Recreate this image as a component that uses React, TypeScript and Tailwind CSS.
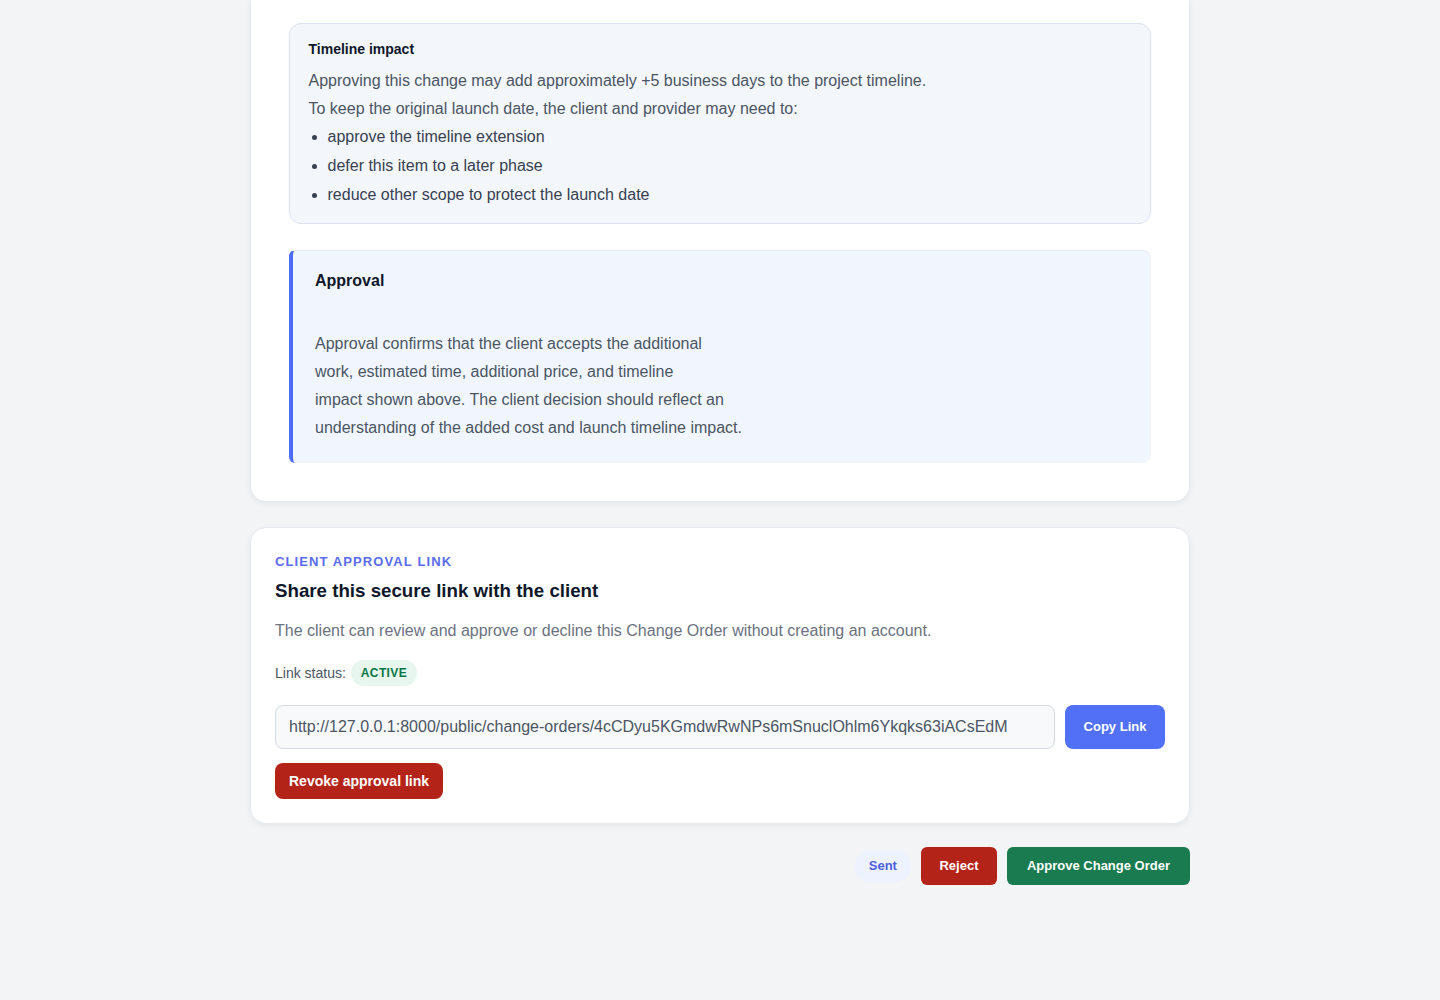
import { useState } from 'react';

const approvalLink =
    'http://127.0.0.1:8000/public/change-orders/4cCDyu5KGmdwRwNPs6mSnuclOhlm6Ykqks63iACsEdM';

const timelineOptions = [
    'approve the timeline extension',
    'defer this item to a later phase',
    'reduce other scope to protect the launch date',
];

function TimelineImpact() {
    return (
        <section className="rounded-xl border border-[#dde3ee] bg-[#f3f6fb] pb-[14px] pl-[18.5px] pr-5 pt-[15px]">
            <h4 className="text-[14px] font-bold leading-5 text-[#0f172a]">Timeline impact</h4>
            <p className="mt-2 text-[16px] leading-7 text-[#4b5563]">
                Approving this change may add approximately +5 business days to the project timeline.
            </p>
            <p className="text-[16px] leading-7 text-[#4b5563]">
                To keep the original launch date, the client and provider may need to:
            </p>
            <ul className="list-disc space-y-[1px] pl-[19px] text-[16px] leading-7 text-[#374151]">
                {timelineOptions.map((item) => (
                    <li key={item}>{item}</li>
                ))}
            </ul>
        </section>
    );
}

function ApprovalNote() {
    return (
        <section className="mt-[26px] rounded-lg rounded-l-md border-l-4 border-t border-l-[#4f6ef7] border-t-[#e5e9f2] bg-[#f1f5fe] pb-[21px] pl-[22px] pr-6 pt-[18px]">
            <h4 className="text-[16px] font-bold leading-6 text-[#0f172a]">Approval</h4>
            <p className="mt-[37px] text-[16px] leading-7 text-[#4b5563]">
                Approval confirms that the client accepts the additional
                <br />
                work, estimated time, additional price, and timeline
                <br />
                impact shown above. The client decision should reflect an
                <br />
                understanding of the added cost and launch timeline impact.
            </p>
        </section>
    );
}

function ApprovalLinkCard() {
    const [copied, setCopied] = useState(false);

    return (
        <section className="mt-[25px] rounded-2xl border border-[#e6e9ef] bg-white p-6 shadow-[0_2px_6px_rgba(15,23,42,0.06)]">
            <p className="text-[13px] font-semibold uppercase leading-5 tracking-[0.085em] text-[#5b6cf0]">
                Client approval link
            </p>
            <h3 className="mt-[5px] text-[18.72px] font-bold leading-7 text-[#0f172a]">
                Share this secure link with the client
            </h3>
            <p className="mt-3.5 text-[16px] leading-6 text-[#6b7280]">
                The client can review and approve or decline this Change Order without creating an account.
            </p>

            <div className="mt-[17px] flex items-center gap-[5px]">
                <span className="text-[14px] text-[#4b5563]">Link status:</span>
                <span className="inline-flex h-[26px] items-center rounded-full bg-[#e7f6ee] px-[10px] text-[12px] font-bold tracking-[0.03em] text-[#067647]">
                    ACTIVE
                </span>
            </div>

            <div className="mt-[19px] flex gap-[10px]">
                <input
                    readOnly
                    value={approvalLink}
                    className="h-[44px] flex-1 rounded-lg border border-[#d5d9e2] bg-[#f8f9fb] px-[13px] text-[16px] text-[#4b5563] outline-none"
                />
                <button
                    type="button"
                    onClick={() => setCopied(true)}
                    className="h-[44px] w-[100px] rounded-lg bg-[#5170f5] text-[13px] font-bold text-white"
                >
                    {copied ? 'Copied' : 'Copy Link'}
                </button>
            </div>

            <button
                type="button"
                className="mt-3.5 h-[36px] rounded-lg bg-[#b42318] px-[14px] text-[14px] font-bold text-white"
            >
                Revoke approval link
            </button>
        </section>
    );
}

export default function App() {
    return (
        <div className="min-h-[1000px] bg-[#f3f4f6] font-['Liberation_Sans',Arial,sans-serif]">
            <div className="mx-auto w-[940px]">
                <article className="rounded-b-2xl border border-t-0 border-[#e6e9ef] bg-white px-[38px] pb-[38px] pt-[23px] shadow-[0_2px_6px_rgba(15,23,42,0.06)]">
                    <TimelineImpact />
                    <ApprovalNote />
                </article>

                <ApprovalLinkCard />

                <div className="mt-[23px] flex items-center justify-end gap-[10px]">
                    <span className="inline-flex h-[32px] items-center rounded-full bg-[#eef2ff] px-[14px] text-[13px] font-bold text-[#4f5fe0]">
                        Sent
                    </span>
                    <button
                        type="button"
                        className="h-[38px] rounded-md bg-[#b42318] px-[18.5px] text-[13px] font-bold text-white"
                    >
                        Reject
                    </button>
                    <button
                        type="button"
                        className="h-[38px] rounded-md bg-[#1a7a50] px-5 text-[13px] font-bold text-white"
                    >
                        Approve Change Order
                    </button>
                </div>
            </div>
        </div>
    );
}
